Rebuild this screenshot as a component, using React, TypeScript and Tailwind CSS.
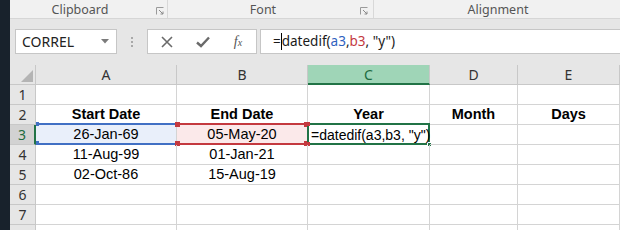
import React from "react";

const ui = { fontFamily: '"Noto Sans", "Open Sans", sans-serif' };
const arial = { fontFamily: '"Liberation Sans", Arial, sans-serif' };

function Launcher() {
  return (
    <svg width="8" height="8" viewBox="0 0 8 8" className="shrink-0">
      <path d="M0.5 7.5V0.5H7.5" fill="none" stroke="#9a9a9a" strokeWidth="1" />
      <path d="M3 3L7 7M7 4.5V7H4.5" fill="none" stroke="#8a8a8a" strokeWidth="1" />
    </svg>
  );
}

const cols = ["A", "B", "C", "D", "E"];

type CellData = { text?: string; bold?: boolean; kind?: "blue" | "red" | "active" };

const rows: Record<number, CellData[]> = {
  2: [
    { text: "Start Date", bold: true },
    { text: "End Date", bold: true },
    { text: "Year", bold: true },
    { text: "Month", bold: true },
    { text: "Days", bold: true },
  ],
  3: [
    { text: "26-Jan-69", kind: "blue" },
    { text: "05-May-20", kind: "red" },
    { text: '=datedif(a3,b3, "y")', kind: "active" },
    {},
    {},
  ],
  4: [{ text: "11-Aug-99" }, { text: "01-Jan-21" }, {}, {}, {}],
  5: [{ text: "02-Oct-86" }, { text: "15-Aug-19" }, {}, {}, {}],
};

function Corners({ color }: { color: string }) {
  return (
    <>
      <span className={`absolute left-[-2px] top-[-3px] w-[5px] h-[5px] ${color}`} />
      <span className={`absolute right-[-2px] top-[-3px] w-[5px] h-[5px] ${color}`} />
      <span className={`absolute left-[-2px] bottom-[-2px] w-[5px] h-[5px] ${color}`} />
      <span className={`absolute right-[-2px] bottom-[-2px] w-[5px] h-[5px] ${color}`} />
    </>
  );
}

function Cell({ d }: { d: CellData }) {
  const base =
    "relative border-r border-b border-[#d4d4d4] flex items-center text-[14.5px] text-black leading-none";
  if (d.kind === "blue") {
    return (
      <div className={`${base} justify-center bg-[#e9effa]`} style={arial}>
        <span className="absolute left-0 right-[-1px] top-[-2px] h-[2px] bg-[#4170c4]" />
        <span className="absolute left-0 right-[-1px] bottom-[-1px] h-[2px] bg-[#4170c4]" />
        <span className="absolute left-0 top-[-3px] w-[3px] h-[4px] bg-[#4170c4]" />
        <span className="absolute left-0 bottom-[-1px] w-[3px] h-[4px] bg-[#4170c4]" />
        {d.text}
      </div>
    );
  }
  if (d.kind === "red") {
    return (
      <div className={`${base} justify-center bg-[#fbe9ea]`} style={arial}>
        <span className="absolute left-0 right-[-1px] top-[-2px] h-[2px] bg-[#c4393f]" />
        <span className="absolute left-0 right-[-1px] bottom-[-1px] h-[2px] bg-[#c4393f]" />
        <Corners color="bg-[#c4393f]" />
        {d.text}
      </div>
    );
  }
  if (d.kind === "active") {
    return (
      <div className={`${base} justify-start overflow-visible`} style={arial}>
        <span className="absolute left-[-1px] right-[-1px] top-[-2px] bottom-[-1px] border-2 border-[#217346]" />
        <span className="absolute right-[-3px] bottom-[-3px] w-[5px] h-[5px] bg-[#217346] border border-white" />
        <span className="absolute left-[-2px] top-[-3px] w-[4px] h-[4px] bg-[#c4393f]" />
        <span className="absolute left-[-2px] bottom-[-2px] w-[4px] h-[4px] bg-[#c4393f]" />
        <span className="relative pl-[3px] whitespace-nowrap z-10 text-[14px]">{d.text}</span>
      </div>
    );
  }
  return (
    <div className={`${base} justify-center ${d.bold ? "font-bold" : ""}`} style={arial}>
      {d.text}
    </div>
  );
}

export default function App() {
  const rowNums = [1, 2, 3, 4, 5, 6, 7, 8];
  return (
    <div className="w-[620px] h-[230px] flex overflow-hidden bg-white">
      <div className="w-[10px] shrink-0 bg-[#18222c]" />
      <div className="flex-1 flex flex-col min-w-0">
        {/* Ribbon group labels */}
        <div
          className="h-[19px] shrink-0 flex items-center bg-[#f1f1f1] border-b border-[#d6d6d6] text-[12.5px] text-[#555]"
          style={ui}
        >
          <div className="w-[158px] shrink-0 h-full flex items-center border-r border-[#d8d8d8]">
            <span className="w-[140px] text-center pt-[2px]">Clipboard</span>
            <span className="ml-[6px] mt-[4px]">
              <Launcher />
            </span>
          </div>
          <div className="w-[206px] shrink-0 h-full flex items-center border-r border-[#d8d8d8]">
            <span className="w-[190px] text-center pt-[2px]">Font</span>
            <span className="ml-[2px] mt-[4px]">
              <Launcher />
            </span>
          </div>
          <div className="flex-1 h-full flex items-center">
            <span className="w-[248px] text-center pt-[2px]">Alignment</span>
          </div>
        </div>

        {/* Formula bar */}
        <div className="h-[46px] shrink-0 bg-[#e6e6e6] flex items-start pt-[10px]" style={ui}>
          <div className="ml-[5px] w-[102px] h-[25px] bg-white border border-[#c6c6c6] flex items-center pl-[6px] pr-[7px]">
            <span className="flex-1 text-[14px] text-[#222] leading-none">CORREL</span>
            <svg width="8" height="5" viewBox="0 0 8 5">
              <path d="M0 0H8L4 4.5Z" fill="#7b7b7b" />
            </svg>
          </div>
          <div className="w-[30px] h-[25px] flex flex-col items-center justify-center gap-[2px]">
            <span className="w-[2px] h-[2px] bg-[#a8a8a8]" />
            <span className="w-[2px] h-[2px] bg-[#a8a8a8]" />
            <span className="w-[2px] h-[2px] bg-[#a8a8a8]" />
          </div>
          <div className="w-[110px] h-[25px] bg-white border border-[#c6c6c6] flex items-center">
            <div className="w-[38px] flex justify-center">
              <svg width="12" height="12" viewBox="0 0 12 12">
                <path d="M1 1L11 11M11 1L1 11" stroke="#6a6a6a" strokeWidth="1.6" fill="none" />
              </svg>
            </div>
            <div className="w-[34px] flex justify-center">
              <svg width="14" height="12" viewBox="0 0 14 12">
                <path d="M1 6.5L5 10L13 1.5" stroke="#6a6a6a" strokeWidth="2.4" fill="none" />
              </svg>
            </div>
            <div className="w-[36px] flex justify-center">
              <span
                className="italic text-[14px] text-[#555] leading-none"
                style={{ fontFamily: '"Liberation Serif", "DejaVu Serif", serif' }}
              >
                f<span className="text-[10px]">x</span>
              </span>
            </div>
          </div>
          <div className="ml-[3px] flex-1 h-[25px] bg-white border-y border-l border-[#c6c6c6] flex items-center pl-[12px]">
            <span className="text-[13.5px] leading-none text-[#1a1a1a] whitespace-nowrap flex items-center">
              =<span className="inline-block w-px h-[17px] bg-black" />
              datedif(<span className="text-[#2f62c0]">a3</span>,<span className="text-[#c4393f]">b3</span>, "y")
            </span>
          </div>
        </div>

        {/* Grid */}
        <div className="grid grid-cols-[26px_141px_131px_122px_88px_102px] grid-rows-[20px_20px_20px_20px_20px_20px_20px_20px_20px] shrink-0">
          {/* corner */}
          <div className="relative bg-[#e6e6e6] border-r border-b border-[#c8c8c8]">
            <svg width="12" height="12" viewBox="0 0 12 12" className="absolute right-[2px] bottom-[2px]">
              <path d="M12 0V12H0Z" fill="#b4b4b4" />
            </svg>
          </div>
          {cols.map((c) =>
            c === "C" ? (
              <div
                key={c}
                className="bg-[#9fd5b7] border-r border-[#c8c8c8] border-b-2 border-b-[#217346] flex items-center justify-center text-[14px] text-[#1d6b40]"
                style={ui}
              >
                {c}
              </div>
            ) : (
              <div
                key={c}
                className="bg-[#e6e6e6] border-r border-b border-[#c8c8c8] flex items-center justify-center text-[14px] text-[#333]"
                style={ui}
              >
                {c}
              </div>
            )
          )}
          {rowNums.map((r) => (
            <React.Fragment key={r}>
              {r === 3 ? (
                <div
                  className="bg-[#d2d2d2] border-b border-[#c8c8c8] border-r-2 border-r-[#217346] flex items-center justify-center text-[14px] text-[#1d6b40]"
                  style={ui}
                >
                  {r}
                </div>
              ) : (
                <div
                  className="bg-[#e6e6e6] border-r border-b border-[#c8c8c8] flex items-center justify-center text-[14px] text-[#333]"
                  style={ui}
                >
                  {r < 8 ? r : ""}
                </div>
              )}
              {(rows[r] ?? [{}, {}, {}, {}, {}]).map((d, i) => (
                <Cell key={i} d={d} />
              ))}
            </React.Fragment>
          ))}
        </div>
      </div>
    </div>
  );
}
